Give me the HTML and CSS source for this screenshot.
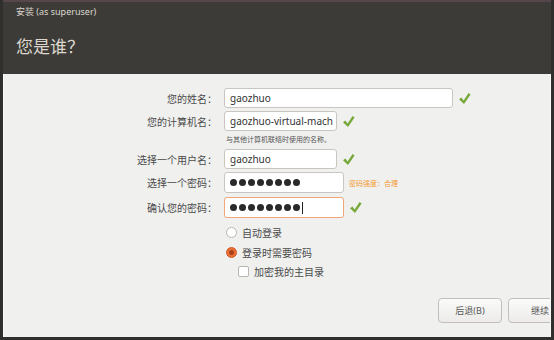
FILE: index.html
```html
<!DOCTYPE html>
<html>
<head>
	<meta charset="utf-8">
	<title>安装 (as superuser)</title>
	<link rel="stylesheet" href="styles.css">
</head>
<body>
<div class="window">
	<div class="header">
		<div class="caption">安装 (as superuser)</div>
		<h1>您是谁？</h1>
	</div>

	<div class="content">
		<div class="row row-name">
			<div class="label">您的姓名：</div>
			<div class="field">
				<div class="entry wide">gaozhuo</div>
				<svg class="check" viewBox="0 0 13 13"><path d="M1 7.2 L3.4 5.6 L5.6 8.4 L10.6 1 L12.6 2.4 L6 12 Z"/></svg>
			</div>
		</div>
		<div class="row">
			<div class="label">您的计算机名：</div>
			<div class="field">
				<div class="entry">gaozhuo-virtual-mach</div>
				<svg class="check" viewBox="0 0 13 13"><path d="M1 7.2 L3.4 5.6 L5.6 8.4 L10.6 1 L12.6 2.4 L6 12 Z"/></svg>
			</div>
		</div>
		<div class="hint">与其他计算机联络时使用的名称。</div>
		<div class="row">
			<div class="label">选择一个用户名：</div>
			<div class="field">
				<div class="entry">gaozhuo</div>
				<svg class="check" viewBox="0 0 13 13"><path d="M1 7.2 L3.4 5.6 L5.6 8.4 L10.6 1 L12.6 2.4 L6 12 Z"/></svg>
			</div>
		</div>
		<div class="row row-pass">
			<div class="label">选择一个密码：</div>
			<div class="field">
				<div class="entry pass">
					<span class="dot"></span><span class="dot"></span><span class="dot"></span><span class="dot"></span>
					<span class="dot"></span><span class="dot"></span><span class="dot"></span><span class="dot"></span>
				</div>
				<span class="strength">密码强度：合理</span>
			</div>
		</div>
		<div class="row row-pass">
			<div class="label">确认您的密码：</div>
			<div class="field">
				<div class="entry pass focus">
					<span class="dot"></span><span class="dot"></span><span class="dot"></span><span class="dot"></span>
					<span class="dot"></span><span class="dot"></span><span class="dot"></span><span class="dot"></span>
					<span class="cursor"></span>
				</div>
				<svg class="check" viewBox="0 0 13 13"><path d="M1 7.2 L3.4 5.6 L5.6 8.4 L10.6 1 L12.6 2.4 L6 12 Z"/></svg>
			</div>
		</div>

		<div class="options">
			<div class="option"><span class="radio"></span>自动登录</div>
			<div class="option"><span class="radio on"></span>登录时需要密码</div>
			<div class="option sub"><span class="box"></span>加密我的主目录</div>
		</div>

		<div class="buttons">
			<div class="button">后退(B)</div>
			<div class="button">继续</div>
		</div>
	</div>
</div>
</body>
</html>
```

FILE: styles.css
```css
body {
	margin:0;
	width:554px;
	height:340px;
	overflow:hidden;
	font-family:"Noto Sans", "Noto Sans CJK SC", sans-serif;
	background-color:#2f2f2d;
}

.window {
	margin-right:3px;
	border-left:3px solid #2f2f2d;
	border-bottom:3px solid #2f2f2d;
	display:flex;
	flex-direction:column;
	box-sizing:border-box;
	height:340px;
}

.header {
	height:74px;
	box-sizing:border-box;
	background-color:#3c3b37;
	border-top:2px solid #54464a;
	padding:4px 0 0 13px;
	color:#dcd8cf;
}

.caption {
	font-size:9px;
	line-height:12px;
}

h1 {
	margin:18px 0 0 0;
	font-size:17px;
	font-weight:normal;
	line-height:22px;
}

.content {
	flex:1;
	position:relative;
	background-color:#f0f0ef;
	border-left:1px solid #fafafa;
	border-right:1px solid #fafafa;
	padding-top:14px;
	font-size:10px;
	color:#3c3c3c;
	overflow:hidden;
}

.row {
	display:flex;
	align-items:center;
	height:20px;
	margin-bottom:3px;
}

.row-pass {
	height:21px;
	margin-bottom:4px;
}

.label {
	width:213px;
	text-align:right;
	color:#4a4a4a;
}

.field {
	display:flex;
	align-items:center;
	margin-left:7px;
	gap:5px;
}

.entry {
	width:113px;
	height:20px;
	box-sizing:border-box;
	padding:0 5px;
	background-color:#fff;
	border:1px solid #c9c6c2;
	border-radius:3px;
	line-height:18px;
	color:#333;
	white-space:nowrap;
	overflow:hidden;
}

.wide {
	width:229px;
}

.pass {
	width:120px;
	height:21px;
	display:flex;
	align-items:center;
	gap:2px;
}

.focus {
	border-color:#f0a678;
}

.dot {
	width:7px;
	height:7px;
	border-radius:50%;
	background-color:#2a2a2a;
}

.cursor {
	width:1px;
	height:12px;
	background-color:#222;
}

.check {
	width:13px;
	height:13px;
	fill:#77a83a;
}

.strength {
	font-size:7px;
	color:#f29a2e;
}

.hint {
	margin:3px 0 4px 222px;
	font-size:7px;
	color:#555;
	line-height:11px;
}

.options {
	margin:3px 0 0 222px;
}

.option {
	display:flex;
	align-items:center;
	gap:5px;
	height:20px;
	color:#4a4a4a;
}

.sub {
	margin-left:12px;
	height:18px;
}

.radio {
	width:9px;
	height:9px;
	border-radius:50%;
	border:1px solid #b9b6b1;
	background-color:#fff;
}

.radio.on {
	border-color:#c9581f;
	background:radial-gradient(circle, #a8421a 0 2px, #ec6f36 3px);
}

.box {
	width:9px;
	height:9px;
	border:1px solid #b9b6b1;
	border-radius:2px;
	background-color:#fff;
}

.buttons {
	position:absolute;
	left:434px;
	top:224px;
	display:flex;
	gap:6px;
}

.button {
	width:64px;
	height:25px;
	box-sizing:border-box;
	border:1px solid #c2bfbb;
	border-radius:4px;
	background:linear-gradient(#fbfbfa, #ecebea);
	text-align:center;
	line-height:23px;
	font-size:9px;
	color:#555;
}
```
